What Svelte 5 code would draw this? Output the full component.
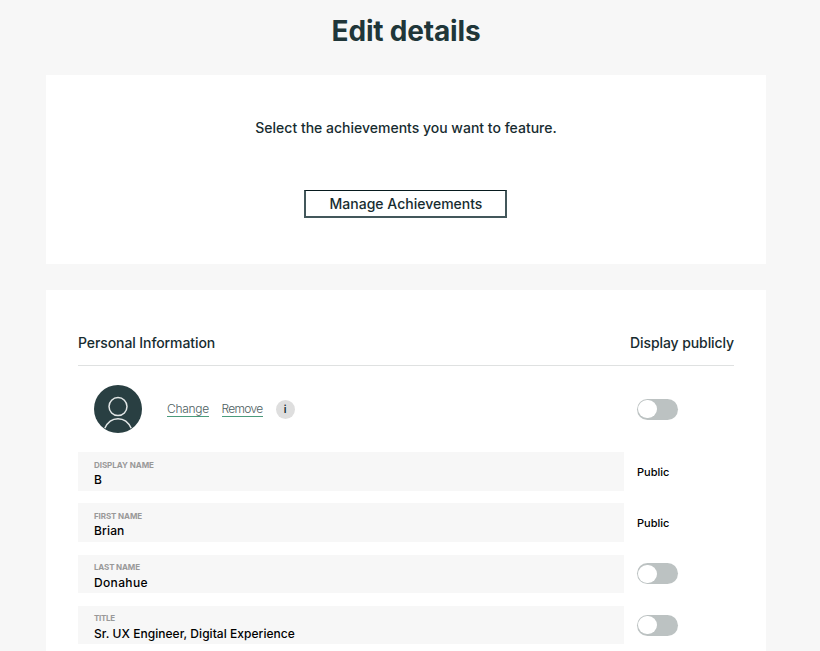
<script>
  const rows = [
    { label: 'DISPLAY NAME', value: 'B', key: 'display', locked: true },
    { label: 'FIRST NAME', value: 'Brian', key: 'first', locked: true },
    { label: 'LAST NAME', value: 'Donahue', key: 'last', locked: false },
    { label: 'TITLE', value: 'Sr. UX Engineer, Digital Experience', key: 'title', locked: false }
  ];
  let shown = $state({ photo: false, last: false, title: false });
</script>

{#snippet toggle(key)}
  <button
    class="toggle"
    class:on={shown[key]}
    role="switch"
    aria-checked={shown[key]}
    aria-label="Display publicly"
    onclick={() => (shown[key] = !shown[key])}
  ><span class="knob"></span></button>
{/snippet}

<main>
  <h1>Edit details</h1>

  <section class="panel feature">
    <p>Select the achievements you want to feature.</p>
    <button class="manage"><span>Manage Achievements</span></button>
  </section>

  <section class="panel info">
    <header>
      <h2 class="personal">Personal Information</h2>
      <h2 class="public-head">Display publicly</h2>
    </header>

    <div class="photo">
      <div class="photo-main">
        <svg class="avatar" viewBox="0 0 48 48" fill="none">
          <circle cx="24" cy="24" r="24" fill="#293f42" />
          <g stroke="#e3e7e7" stroke-width="1.5">
            <circle cx="24" cy="21.6" r="9" />
            <path d="M10.8 43.3C13.6 37 18.2 33.7 24 33.7S34.4 37 37.2 43.3" />
          </g>
        </svg>
        <a class="change" href="#change"><span>Change</span></a>
        <a class="remove" href="#remove"><span>Remove</span></a>
        <span class="hint">i</span>
      </div>
      <div class="visibility">{@render toggle('photo')}</div>
    </div>

    {#each rows as row}
      <div class="row">
        <div class="field">
          <span class="label {row.key}">{row.label}</span>
          <span class="value {row.key}">{row.value}</span>
        </div>
        <div class="visibility">
          {#if row.locked}<span class="locked">Public</span>{:else}{@render toggle(row.key)}{/if}
        </div>
      </div>
    {/each}
  </section>
</main>

<style>
  :global(body) { margin: 0; overflow: hidden; background: #f7f7f7; }
  main {
    box-sizing: border-box;
    height: 651px;
    overflow: hidden;
    padding-left: 46px;
    background: #f7f7f7;
    color: #172c30;
    font-family: Inter, "Liberation Sans", sans-serif;
  }
  h1, h2, p { margin: 0; }
  h1 {
    width: 720px;
    height: 74.5px;
    line-height: 63px;
    text-align: center;
    font-size: 28px;
    font-weight: 650;
    color: #203639;
    letter-spacing: -0.18px;
  }
  .panel { box-sizing: border-box; width: 720px; background: #fff; }
  .feature {
    height: 189px;
    display: flex;
    flex-direction: column;
    align-items: center;
    padding-top: 43.5px;
  }
  .feature p { font-size: 14px; line-height: 20px; font-weight: 500; white-space: nowrap; }
  .manage {
    box-sizing: border-box;
    width: 203px;
    height: 28.4px;
    margin: 52px 1px 0 0;
    padding: 0 0 0 1px;
    border: 2px solid #43575b;
    border-top: 1px solid #071a1e;
    outline: 0;
    background: #fff;
    color: #172c30;
    font: 500 14px/24px Inter, sans-serif;
    white-space: nowrap;
  }
  .info { height: 420px; margin-top: 26px; padding: 0 32px; }
  header {
    box-sizing: border-box;
    display: flex;
    justify-content: space-between;
    width: 656px;
    height: 76.5px;
    padding-top: 43.5px;
    border-bottom: 1px solid #dfe1e1;
  }
  h2 { font-size: 14px; line-height: 20px; font-weight: 500; white-space: nowrap; letter-spacing: -0.09px; }
  .photo { display: flex; height: 86px; }
  .photo-main { display: flex; align-items: center; width: 530px; padding-left: 16px; }
  .avatar { width: 48px; height: 48px; margin-right: 25px; }
  a {
    color: #4d5d60;
    font-size: 12px;
    line-height: 14px;
    font-weight: 350;
    text-decoration: none;
    border-bottom: 1px solid #4b9b7c;
    white-space: nowrap;
  }
  .change { width: 42px; margin-right: 12.5px; letter-spacing: -0.3px; }
  .remove { width: 41px; margin-right: 13px; letter-spacing: -0.7px; }
  .hint {
    width: 19px;
    height: 19px;
    border-radius: 50%;
    background: #dedede;
    text-align: center;
    font-size: 10.5px;
    line-height: 19px;
    font-weight: 600;
  }
  .visibility { display: flex; align-items: center; margin-left: 13px; }
  .toggle {
    box-sizing: border-box;
    width: 40.5px;
    height: 21px;
    padding: 1.25px;
    border: 0;
    border-radius: 11px;
    background: #bcc2c2;
    display: flex;
  }
  .toggle.on { justify-content: flex-end; background: #4b9b7c; }
  .knob { width: 18.5px; height: 18.5px; border-radius: 50%; background: #fff; }
  .row { display: flex; height: 38.5px; margin-bottom: 12.8px; }
  .field {
    box-sizing: border-box;
    display: flex;
    flex-direction: column;
    width: 546px;
    padding: 6.5px 16px 0;
    background: #f7f7f7;
    color: #000;
    white-space: nowrap;
  }
  .label { color: #999; font-size: 8px; line-height: 12px; font-weight: 700; }
  .label.first { letter-spacing: -0.1px; }
  .label.last { letter-spacing: -0.15px; }
  .label.title { letter-spacing: -0.3px; }
  .label.display { letter-spacing: -0.05px; }
  .value { font-size: 12px; line-height: 18.4px; font-weight: 550; }
  .value.first { letter-spacing: 0.15px; }
  .value.last { line-height: 19px; letter-spacing: 0.35px; }
  .value.title { line-height: 19px; letter-spacing: 0.04px; }
  .locked { position: relative; top: 0.7px; color: #000; font-size: 11px; font-weight: 500; }
</style>
